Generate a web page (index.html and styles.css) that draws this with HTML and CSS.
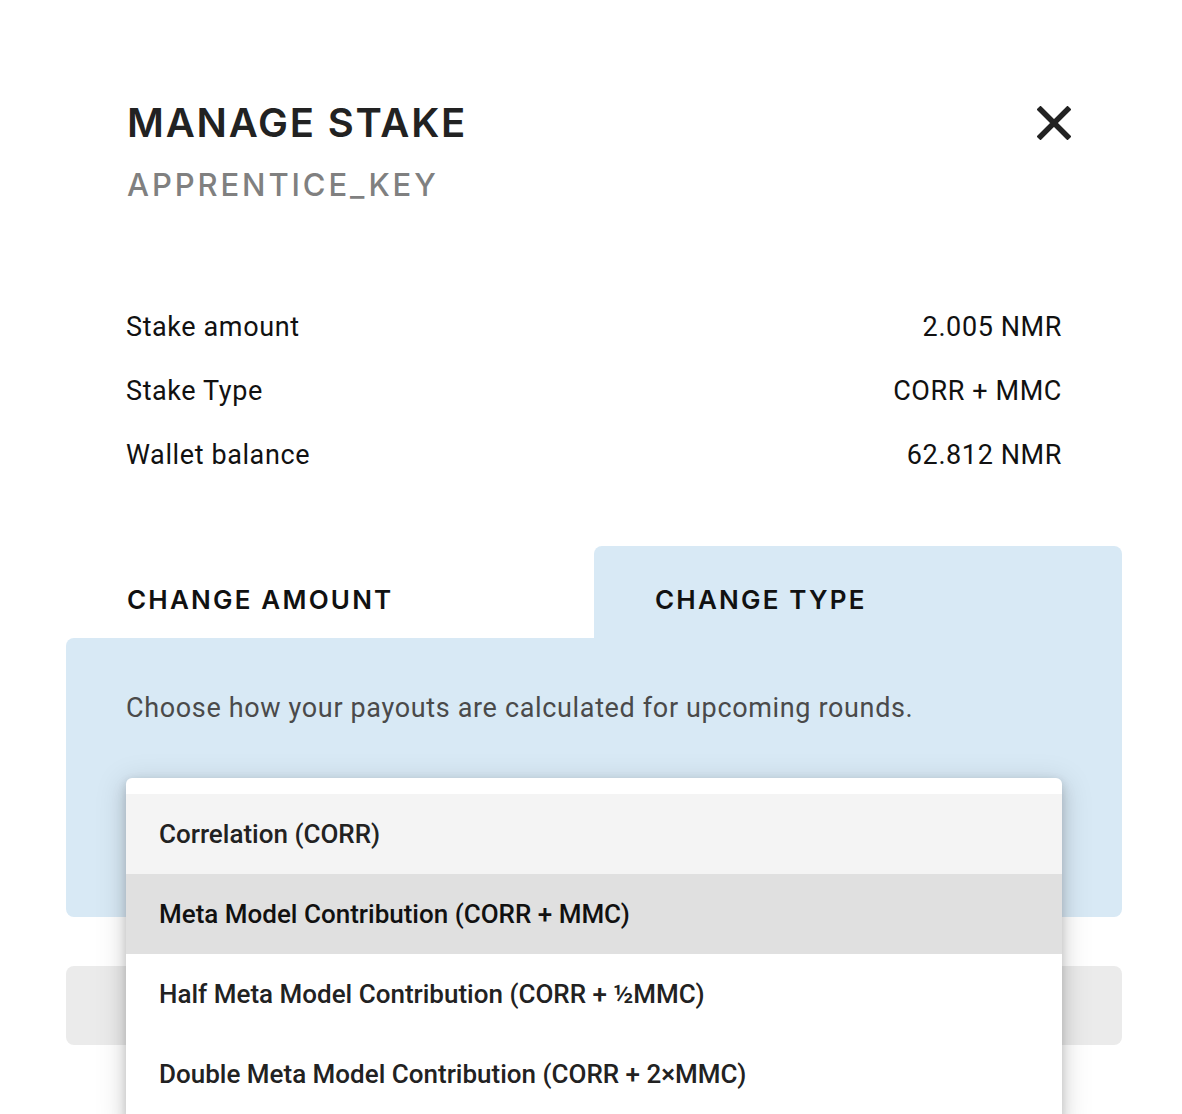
FILE: index.html
```html
<!DOCTYPE html>
<html>
<head>
<meta charset="utf-8">
<link rel="stylesheet" href="styles.css">
</head>
<body>
<div class="modal">
  <header class="head">
    <div class="titles">
      <h1 class="title">MANAGE STAKE</h1>
      <div class="subtitle">APPRENTICE_KEY</div>
    </div>
    <button class="close" aria-label="Close">
      <svg width="34" height="34" viewBox="0 0 34 34"><path d="M3.5 3.5 L30.5 30.5 M30.5 3.5 L3.5 30.5" stroke="#222" stroke-width="5.5" stroke-linecap="square" fill="none"/></svg>
    </button>
  </header>

  <dl class="info">
    <div class="row"><dt>Stake amount</dt><dd>2.005 NMR</dd></div>
    <div class="row"><dt>Stake Type</dt><dd>CORR + MMC</dd></div>
    <div class="row"><dt>Wallet balance</dt><dd>62.812 NMR</dd></div>
  </dl>

  <div class="tabs">
    <div class="tab">CHANGE AMOUNT</div>
    <div class="tab active">CHANGE TYPE</div>
  </div>
  <div class="panel">
    <p class="desc">Choose how your payouts are calculated for upcoming rounds.</p>
    <div class="select-wrap">
      <ul class="menu">
        <li class="opt hover">Correlation (CORR)</li>
        <li class="opt selected">Meta Model Contribution (CORR + MMC)</li>
        <li class="opt">Half Meta Model Contribution (CORR + ½MMC)</li>
        <li class="opt">Double Meta Model Contribution (CORR + 2×MMC)</li>
      </ul>
    </div>
  </div>
  <div class="button-bar"></div>
</div>
</body>
</html>
```
FILE: styles.css
```css
html {
  overflow: hidden;
  background: #fff;
}
body {
  margin: 0;
  padding: 0;
  min-height: 1114px;
  font-family: Roboto, "Liberation Sans", sans-serif;
  color: #1a1a1a;
}
.modal {
  width: 1056px;
  padding: 100px 60px 80px 66px;
}
.head {
  display: flex;
  justify-content: space-between;
  align-items: flex-start;
  padding-left: 61px;
}
.title {
  margin: 0;
  font-family: Inter, "DejaVu Sans", sans-serif;
  font-weight: 600;
  font-size: 40px;
  line-height: 46px;
  letter-spacing: 1.8px;
  color: #222;
}
.subtitle {
  margin-top: 21px;
  font-family: Inter, "DejaVu Sans", sans-serif;
  font-weight: 500;
  font-size: 31px;
  line-height: 36px;
  letter-spacing: 2.9px;
  color: #808080;
}
.close {
  border: 0;
  background: none;
  padding: 0;
  margin-top: 6px;
  margin-right: 51px;
  width: 34px;
  height: 34px;
  cursor: pointer;
}
.info {
  margin: 92px 0 0 0;
  padding: 0 60px;
}
.row {
  display: flex;
  justify-content: space-between;
  height: 64px;
  align-items: center;
  font-size: 27px;
  letter-spacing: 0.6px;
  color: #111;
}
.row dt, .row dd { margin: 0; }
.tabs {
  display: flex;
  margin-top: 59px;
}
.tab {
  flex: 1;
  height: 92px;
  box-sizing: border-box;
  padding-top: 15px;
  display: flex;
  align-items: center;
  padding-left: 61px;
  font-family: Inter, "DejaVu Sans", sans-serif;
  font-weight: 600;
  font-size: 26px;
  letter-spacing: 2.2px;
  color: #111;
  border-radius: 8px 8px 0 0;
}
.tab.active {
  background: #d8e9f5;
}
.panel {
  background: #d8e9f5;
  border-radius: 8px 0 8px 8px;
  height: 279px;
  padding: 0 60px;
  position: relative;
}
.desc {
  margin: 0;
  padding-top: 52px;
  font-size: 27px;
  line-height: 36px;
  letter-spacing: 0.65px;
  color: #4a4a4a;
}
.select-wrap {
  position: relative;
  margin-top: 52px;
}
.menu {
  position: absolute;
  top: 0;
  left: 0;
  right: 0;
  z-index: 2;
  list-style: none;
  margin: 0;
  padding: 16px 0 8px;
  background: #fff;
  border-radius: 6px;
  box-shadow: 0 8px 16px rgba(0,0,0,0.12), 0 6px 28px 6px rgba(0,0,0,0.1), 0 2px 8px rgba(0,0,0,0.1);
}
.opt {
  height: 80px;
  display: flex;
  align-items: center;
  padding-left: 33px;
  font-size: 26px;
  font-weight: 500;
  color: #222;
}
.opt.hover { background: #f4f4f4; }
.opt.selected { background: #e0e0e0; color: #111; }
.button-bar {
  margin-top: 49px;
  height: 79px;
  background: #ebebeb;
  border-radius: 8px;
}
```
